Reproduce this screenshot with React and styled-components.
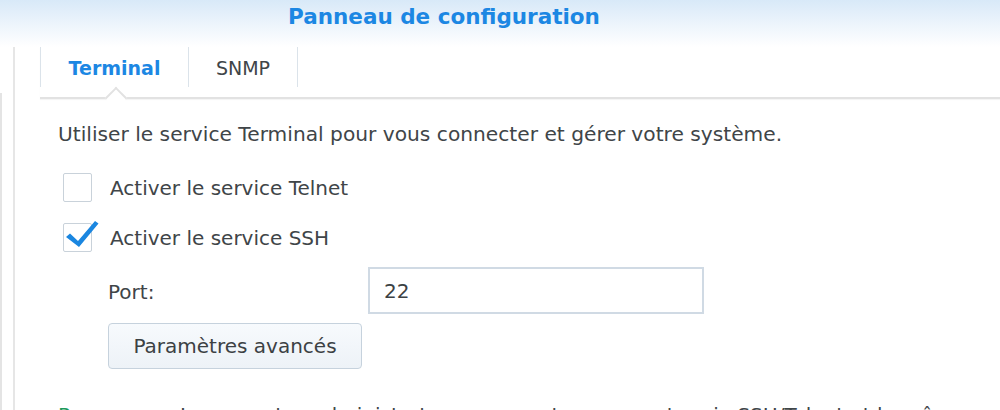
import styled, { createGlobalStyle } from "styled-components";

const GlobalStyle = createGlobalStyle`
  html, body {
    margin: 0;
    padding: 0;
    background: #ffffff;
    overflow: hidden;
  }
  body {
    font-family: "DejaVu Sans", Verdana, sans-serif;
    color: #404548;
  }
`;

function Checkmark() {
  return (
    <svg width="34" height="30" viewBox="0 0 34 30">
      <path d="M1 17 L5 13.5 L13 21 L30 1 L33.5 3.5 L14 27 Z" fill="#1a86e0" />
    </svg>
  );
}

function App() {
  return (
    <StyledPage>
      <GlobalStyle />
      <StyledHeader>Panneau de configuration</StyledHeader>
      <StyledBody>
        <StyledOuterEdge />
        <StyledPanel>
          <StyledTabBar>
            <StyledTab active>Terminal</StyledTab>
            <StyledTab last>SNMP</StyledTab>
          </StyledTabBar>
          <StyledContent>
            <StyledDescription>
              Utiliser le service Terminal pour vous connecter et gérer votre
              système.
            </StyledDescription>
            <StyledCheckRow top={27}>
              <StyledCheckbox />
              <span>Activer le service Telnet</span>
            </StyledCheckRow>
            <StyledCheckRow top={21}>
              <StyledCheckbox>
                <Checkmark />
              </StyledCheckbox>
              <span>Activer le service SSH</span>
            </StyledCheckRow>
            <StyledPortRow>
              <label>Port:</label>
              <StyledInput>22</StyledInput>
            </StyledPortRow>
            <StyledButton>Paramètres avancés</StyledButton>
            <StyledNote>
              <strong>Remarque :</strong> Les comptes administrateurs peuvent se
              connecter via SSH/Telnet et le même mot de passe que le compte
              admin.
            </StyledNote>
          </StyledContent>
        </StyledPanel>
      </StyledBody>
    </StyledPage>
  );
}

export default App;

const StyledPage = styled.div`
  width: 1000px;
  height: 410px;
  overflow: hidden;
  display: flex;
  flex-direction: column;
`;

const StyledHeader = styled.h1`
  margin: 0;
  height: 47px;
  flex-shrink: 0;
  box-sizing: border-box;
  padding: 4px 0 0 288px;
  font-size: 21.5px;
  font-weight: bold;
  color: #1c87e3;
  background: linear-gradient(180deg, #d8e9f8 0%, #eef5fc 55%, #ffffff 100%);
`;

const StyledBody = styled.div`
  display: flex;
  flex: 1;
  min-height: 0;
`;

const StyledOuterEdge = styled.div`
  flex-shrink: 0;
  width: 11px;
  margin-top: 46px;
  border-left: 2px solid #e4e4e4;
`;

const StyledPanel = styled.div`
  flex: 1;
  min-width: 0;
  overflow: hidden;
  border-left: 2px solid #e6e6e6;
  padding-left: 25px;
`;

const StyledTabBar = styled.div`
  display: flex;
  height: 52px;
  box-sizing: border-box;
  border-bottom: 2px solid #e2e2e2;
  box-shadow: 0 1px 1px rgba(0, 0, 0, 0.04);
`;

const StyledTab = styled.div`
  position: relative;
  height: 40px;
  box-sizing: border-box;
  display: flex;
  align-items: center;
  justify-content: center;
  width: ${(p) => (p.active ? "148px" : "110px")};
  border-left: 1px solid #dbe3ea;
  border-right: ${(p) => (p.last ? "1px solid #dbe3ea" : "none")};
  font-size: 19px;
  font-weight: ${(p) => (p.active ? "bold" : "normal")};
  color: ${(p) => (p.active ? "#1c87e3" : "#404548")};
  padding-top: 2px;

  ${(p) =>
    p.active &&
    `
    &::after {
      content: "";
      position: absolute;
      left: 67px;
      top: 41px;
      width: 14px;
      height: 14px;
      background: #ffffff;
      border-left: 2px solid #e2e2e2;
      border-top: 2px solid #e2e2e2;
      transform: translateY(2px) rotate(45deg);
      z-index: 2;
    }
  `}
`;

const StyledContent = styled.div`
  padding: 23px 0 0 18px;
  display: flex;
  flex-direction: column;
  align-items: flex-start;
  font-size: 20px;
  color: #404548;
`;

const StyledDescription = styled.p`
  margin: 0;
  line-height: 24px;
  white-space: nowrap;
  font-size: 20.2px;
`;

const StyledCheckRow = styled.div`
  display: flex;
  align-items: center;
  gap: 18px;
  margin: ${(p) => p.top}px 0 0 5px;
  height: 29px;
`;

const StyledCheckbox = styled.div`
  position: relative;
  width: 29px;
  height: 29px;
  box-sizing: border-box;
  border: 1px solid #c9d2da;
  border-radius: 2px;
  background: #ffffff;

  svg {
    position: absolute;
    left: 1px;
    top: -4px;
  }
`;

const StyledPortRow = styled.div`
  display: flex;
  align-items: center;
  margin: 15px 0 0 50px;

  label {
    width: 260px;
    padding-top: 3px;
  }
`;

const StyledInput = styled.div`
  width: 336px;
  height: 47px;
  box-sizing: border-box;
  border: 2px solid #d0dae4;
  padding: 0 14px;
  display: flex;
  align-items: center;
  font-size: 20px;
  color: #3c4144;
`;

const StyledButton = styled.button`
  margin: 9px 0 0 50px;
  width: 254px;
  height: 46px;
  border: 1px solid #c6d2dd;
  border-radius: 4px;
  background: linear-gradient(180deg, #f7fafd 0%, #edf2f7 100%);
  font-family: "DejaVu Sans", Verdana, sans-serif;
  font-size: 20px;
  color: #3c4144;
`;

const StyledNote = styled.p`
  margin: 34px 0 0 0;
  white-space: nowrap;
  line-height: 24px;

  strong {
    font-weight: normal;
    color: #1d9a5a;
  }
`;
